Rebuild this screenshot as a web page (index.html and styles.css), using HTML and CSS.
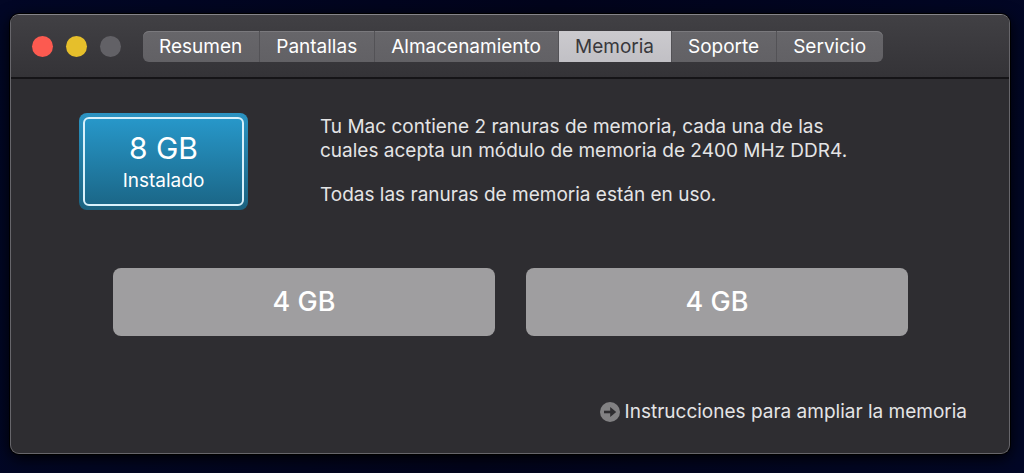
FILE: index.html
```html
<!DOCTYPE html>
<html lang="es">
  <head>
    <meta charset="UTF-8" />
    <meta name="viewport" content="width=device-width, initial-scale=1.0" />
    <title>Acerca de este Mac</title>
    <link rel="stylesheet" href="styles.css">
  </head>
  <body>
    <div class="window">
      <header class="toolbar">
        <div class="lights">
          <button class="light close" aria-label="Cerrar"></button>
          <button class="light minimize" aria-label="Minimizar"></button>
          <button class="light zoom" aria-label="Ampliar" disabled></button>
        </div>
        <nav class="tabs">
          <button class="tab">Resumen</button>
          <button class="tab">Pantallas</button>
          <button class="tab">Almacenamiento</button>
          <button class="tab active">Memoria</button>
          <button class="tab">Soporte</button>
          <button class="tab">Servicio</button>
        </nav>
      </header>

      <main class="content">
        <section class="summary">
          <div class="badge">
            <div class="badge-inner">
              <span class="badge-size">8 GB</span>
              <span class="badge-label">Instalado</span>
            </div>
          </div>
          <div class="info">
            <p>
              Tu Mac contiene 2 ranuras de memoria, cada una de las<br />
              cuales acepta un módulo de memoria de 2400 MHz DDR4.
            </p>
            <p>Todas las ranuras de memoria están en uso.</p>
          </div>
        </section>

        <section class="slots">
          <div class="slot">4 GB</div>
          <div class="slot">4 GB</div>
        </section>

        <a class="help" href="#">
          <svg width="20" height="20" viewBox="0 0 20 20" aria-hidden="true">
            <circle cx="10" cy="10" r="10" fill="#828183" />
            <path d="M4 10H12" stroke="#2e2d30" stroke-width="2.6" />
            <path d="M10.2 5L16.2 10L10.2 15Z" fill="#2e2d30" />
          </svg>
          Instrucciones para ampliar la memoria
        </a>
      </main>
    </div>
  </body>
</html>
```
FILE: styles.css
```css
* {
  margin: 0;
  padding: 0;
  box-sizing: border-box;
}

body {
  display: flex;
  min-height: 100vh;
  padding: 14px 14px 19px 10px;
  background: linear-gradient(100deg, #020726, #02041c 50%, #020726);
  font-family: Inter, "Liberation Sans", sans-serif;
  font-size: 19px;
  color: #e4e4e5;
}

button {
  border: none;
  font: inherit;
  color: inherit;
}

.window {
  flex: 1;
  display: flex;
  flex-direction: column;
  border: 1px solid #67666b;
  border-top-color: #858489;
  border-radius: 9px;
  background: #2e2d31;
  box-shadow: 0 0 0 1px #000, 0 4px 16px #000;
  overflow: hidden;
}

.toolbar {
  display: flex;
  align-items: center;
  gap: 22px;
  height: 64px;
  padding: 0 21px;
  background: linear-gradient(#414044, #343337);
  border-bottom: 2px solid #151417;
}

.lights {
  display: flex;
  gap: 13px;
}

.light {
  width: 21px;
  height: 21px;
  border-radius: 50%;
}

.close {
  background: #fc5a50;
}

.minimize {
  background: #e6bf2b;
}

.zoom {
  background: #626166;
}

.tabs {
  display: flex;
  border-radius: 6px;
  background: linear-gradient(#67666a, #626165);
  box-shadow: inset 0 1px #7a797d;
  overflow: hidden;
}

.tab {
  height: 31px;
  padding: 0 17px 0 16px;
  background: none;
  border-right: 1px solid #535256;
  color: #fff;
}

.tab:last-child {
  border-right: none;
}

.tab.active {
  background: linear-gradient(#cbcace, #c1c0c5);
  color: #39383c;
}

.content {
  flex: 1;
  display: flex;
  flex-direction: column;
  padding: 34px 42px 30px 68px;
}

.summary {
  display: flex;
  gap: 72px;
}

.badge {
  width: 169px;
  height: 97px;
  padding: 4px;
  border-radius: 8px;
  background: linear-gradient(#2b93c2, #1c627f);
}

.badge-inner {
  display: flex;
  flex-direction: column;
  align-items: center;
  justify-content: center;
  height: 100%;
  padding-top: 2px;
  border: 2px solid #d9f1fb;
  border-radius: 6px;
  background: linear-gradient(#2797c9, #1b6788);
  color: #fff;
}

.badge-size {
  font-size: 30px;
  line-height: 36px;
}

.badge-label {
  line-height: 30px;
}

.info {
  padding-top: 2px;
  line-height: 24px;
}

.info p + p {
  margin-top: 20px;
}

.slots {
  display: grid;
  grid-template-columns: 1fr 1fr;
  gap: 31px;
  margin-top: 58px;
  padding: 0 59px 0 34px;
}

.slot {
  border-radius: 8px;
  background: #9f9ea0;
  font-size: 27px;
  font-weight: 500;
  line-height: 68px;
  text-align: center;
  color: #fff;
}

.help {
  display: flex;
  align-items: center;
  align-self: flex-end;
  gap: 5px;
  margin-top: auto;
  color: inherit;
  text-decoration: none;
}
```
